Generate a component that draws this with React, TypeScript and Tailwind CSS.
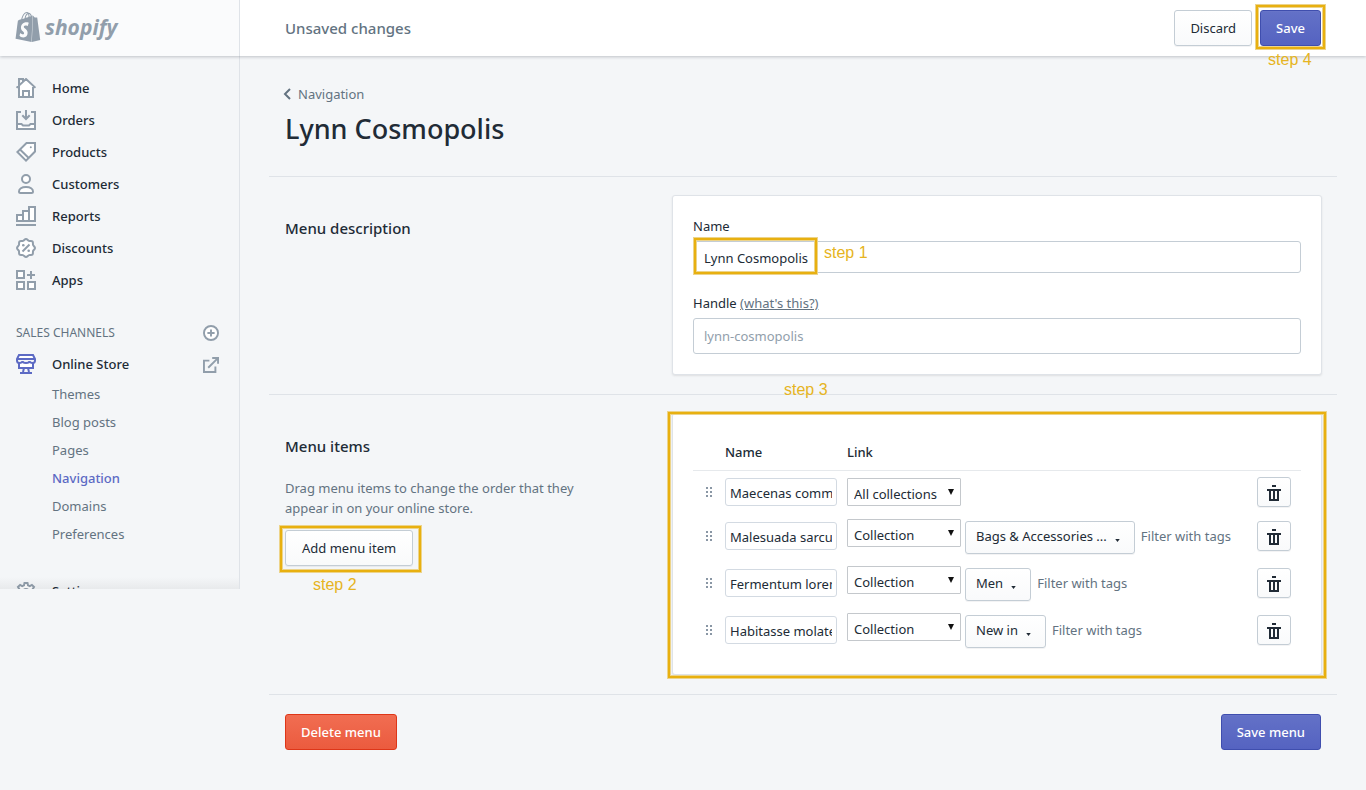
import type { ReactNode } from "react";
import { SiShopify } from "react-icons/si";

type IconProps = { children: ReactNode; className?: string };

function Icon({ children, className = "size-5 text-[#919eab]" }: IconProps) {
  return (
    <svg viewBox="0 0 20 20" fill="none" stroke="currentColor" strokeWidth="2" className={className} aria-hidden="true">
      {children}
    </svg>
  );
}

const navItems: { label: string; icon: ReactNode }[] = [
  {
    label: "Home",
    icon: (
      <>
        <path d="M3 8.500V19h14V8.500L10 2z" fill="#fff" stroke="none" />
        <path d="M3 9V1h4v3M3 9v10h14V9M.5 9.800 10 1l9.500 8.800M7 19v-6h6v6" />
      </>
    ),
  },
  {
    label: "Orders",
    icon: (
      <>
        <path d="M1 14h4.500l1.500 1.500h6l1.500-1.500H19v5H1z" fill="#fff" stroke="none" />
        <path d="M5 2H1v17h18V2h-4M1 14h4.500l1.500 1.500h6l1.500-1.500H19M10 0v8.500M6.300 5.200 10 9l3.700-3.800" />
      </>
    ),
  },
  {
    label: "Products",
    icon: (
      <>
        <path d="M10.500 1H19v8.500L10 18.600 1.400 10z" fill="#fff" />
        <path d="m4 7.500 9 8.700" />
        <circle cx="14.800" cy="5.200" r="1" fill="currentColor" stroke="none" />
      </>
    ),
  },
  {
    label: "Customers",
    icon: (
      <>
        <circle cx="10" cy="5" r="4" fill="#fff" />
        <path d="M10 13c-4.400 0-7 2-7 4.500 0 1 .5 1.500 1.500 1.500h11c1 0 1.500-.5 1.500-1.500C17 15 14.400 13 10 13z" fill="#fff" />
      </>
    ),
  },
  {
    label: "Reports",
    icon: (
      <>
        <path d="M1 15V9h6v6zM7 15V5h6v10zM13 15V1h6v14z" fill="#fff" />
        <path d="M0 19h20" />
      </>
    ),
  },
  {
    label: "Discounts",
    icon: (
      <>
        <path
          d="M10 1c1.300 0 1.900 1.500 3 1.900 1.100.4 2.600-.4 3.500.6s.1 2.400.6 3.500C17.500 8.100 19 8.700 19 10s-1.500 1.900-1.900 3c-.5 1.100.3 2.600-.6 3.500s-2.400.1-3.500.6c-1.100.4-1.700 1.900-3 1.900s-1.900-1.500-3-1.900c-1.100-.5-2.600.3-3.500-.6s-.1-2.400-.6-3.500C2.500 11.900 1 11.300 1 10s1.500-1.900 1.900-3c.5-1.100-.3-2.600.6-3.500s2.400-.2 3.500-.6C8.100 2.500 8.700 1 10 1z"
          fill="#fff"
        />
        <path d="m6.500 13.500 7-7" />
        <circle cx="7.300" cy="7.300" r="1.300" fill="currentColor" stroke="none" />
        <circle cx="12.700" cy="12.700" r="1.300" fill="currentColor" stroke="none" />
      </>
    ),
  },
  {
    label: "Apps",
    icon: (
      <>
        <path d="M1 1h7v7H1zM1 12h7v7H1zM12 12h7v7h-7z" fill="#fff" />
        <path d="M11 5h8M15 1v8" />
      </>
    ),
  },
];

const storeLinks = ["Themes", "Blog posts", "Pages", "Navigation", "Domains", "Preferences"];

type MenuItem = { name: string; link: string; target?: string };

const menuItems: MenuItem[] = [
  { name: "Maecenas commodo", link: "All collections" },
  { name: "Malesuada sarcuat", link: "Collection", target: "Bags & Accessories ..." },
  { name: "Fermentum lorem", link: "Collection", target: "Men" },
  { name: "Habitasse molates", link: "Collection", target: "New in" },
];

const plainButton =
  "rounded-[3px] border border-[#c4cdd5] bg-linear-to-b from-white to-[#f9fafb] text-[#212b36] shadow-[0_1px_0_rgba(22,29,37,0.05)]";
const primaryButton =
  "h-9 rounded-[3px] border border-[#3f4eae] bg-linear-to-b from-[#6371c7] to-[#5563c1] px-[15px] pt-0.5 text-[13px] font-medium text-white shadow-[inset_0_1px_0_#6774c8]";

function Highlight({ className }: { className: string }) {
  return (
    <span
      aria-hidden="true"
      className={`pointer-events-none absolute border-2 border-[#e8b010] shadow-[0_0_0_1px_#edd48a,inset_0_0_0_1px_#edd48a] ${className}`}
    />
  );
}

function Step({ n, className }: { n: number; className: string }) {
  return (
    <span
      className={`pointer-events-none absolute font-['Liberation_Sans',Arial,sans-serif] text-base leading-5 whitespace-nowrap text-[#e6b422] ${className}`}
    >
      step {n}
    </span>
  );
}

function Sidebar() {
  return (
    <nav className="relative h-[533px] w-60 shrink-0 overflow-hidden border-r border-[#dfe3e8] pt-4">
      <ul>
        {navItems.map((item) => (
          <li key={item.label}>
            <a href="#" className="flex h-8 items-center gap-4 px-4 text-[13px] font-medium text-[#212b36]">
              <Icon>{item.icon}</Icon>
              <span className="pt-0.5">{item.label}</span>
            </a>
          </li>
        ))}
      </ul>
      <div className="mt-5 flex h-8 items-center justify-between pt-px pr-5 pl-4">
        <h2 className="text-xs text-[#637381] uppercase">Sales channels</h2>
        <button type="button" aria-label="Add sales channel">
          <Icon className="size-4 text-[#919eab]">
            <circle cx="10" cy="10" r="8.800" strokeWidth="2.400" fill="#fff" />
            <path d="M5.500 10h9M10 5.500v9" strokeWidth="2.400" />
          </Icon>
        </button>
      </div>
      <div className="flex h-8 items-center justify-between pr-5 pl-4">
        <a href="#" className="flex items-center gap-4 text-[13px] font-medium text-[#212b36]">
          <Icon className="size-5 text-[#5c6ac4]">
            <path d="M3 8v6h14V8M3 1h14l2 4H1z" fill="#fff" />
            <path d="M1 5v1.500C1 8 2 9 3.500 9S6.500 8 6.500 7c0 1 1.500 2 3.500 2s3.500-1 3.500-2c0 1 1.500 2 3 2S19 8 19 6.500V5M8 14l-1 4M12 14l1 4M4 19h12" />
          </Icon>
          <span className="pt-0.5">Online Store</span>
        </a>
        <a href="#" aria-label="View your online store" className="pt-0.5">
          <Icon className="size-4 text-[#919eab]">
            <path d="M8 4.500H1.200v14.300h14.300V12" strokeWidth="2.400" />
            <path d="M6.500 13.500 18 2M11.500 1.300h7.300v7.200" strokeWidth="2.400" />
          </Icon>
        </a>
      </div>
      <ul>
        {storeLinks.map((label) => (
          <li key={label}>
            <a
              href="#"
              className={`flex h-7 items-center pt-px pl-[52px] text-[13px] ${
                label === "Navigation" ? "font-medium text-[#5c6ac4]" : "text-[#637381]"
              }`}
            >
              {label}
            </a>
          </li>
        ))}
      </ul>
      <a href="#" className="mt-7 flex h-8 items-center gap-4 px-4 text-[13px] font-medium text-[#212b36]">
        <Icon>
          <path
            d="M8.500 1h3l.5 2.400 1.800.8 2.100-1.300 2.100 2.100-1.300 2.100.8 1.800 2.500.6v3l-2.500.5-.8 1.800 1.300 2.100-2.100 2.100-2.100-1.300-1.800.8-.5 2.500h-3L8 18.500l-1.800-.8L4.100 19 2 16.900l1.300-2.100-.8-1.800L0 12.500v-3l2.500-.6.8-1.800L2 5l2.100-2.100 2.100 1.300L8 3.400z"
            fill="#fff"
          />
          <circle cx="10" cy="10.500" r="3.500" />
        </Icon>
        Settings
      </a>
      <div className="pointer-events-none absolute inset-x-0 bottom-0 h-3 bg-linear-to-b from-transparent to-black/5" />
    </nav>
  );
}

function TrashIcon() {
  return (
    <svg viewBox="0 0 14 16" className="h-4 w-3.5" fill="none" stroke="#212b36" strokeWidth="2" aria-hidden="true">
      <path d="M5 1h4M0 5h14M3 5v10h8V5M7 6v9" />
    </svg>
  );
}

function GripIcon() {
  return (
    <svg viewBox="0 0 6 10" className="h-2.5 w-1.5" fill="#8a97a5" aria-hidden="true">
      <path d="M0 0h2v2H0zM4 0h2v2H4zM0 4h2v2H0zM4 4h2v2H4zM0 8h2v2H0zM4 8h2v2H4z" />
    </svg>
  );
}

function MenuRow({ item }: { item: MenuItem }) {
  return (
    <tr className="align-top">
      <td className="pt-4 pl-[13px]">
        <GripIcon />
      </td>
      <td className="pt-[7px] pr-2.5">
        <input
          aria-label="Menu item name"
          defaultValue={item.name}
          className="block h-7 w-full rounded-[3px] border border-[#d3dae2] bg-white px-1 pt-0.5 text-[13px] text-[#212b36]"
        />
      </td>
      <td className={item.target ? "pt-1" : "pt-[7px]"}>
        <div className="flex items-start">
          <div className="relative mr-1 w-[114px]">
            <select
              aria-label="Link type"
              defaultValue={item.link}
              className="block h-7 w-full appearance-none rounded-[1px] border border-[#c4c8cc] bg-white pt-1.5 pl-1.5 text-[13px] text-[#212b36]"
            >
              <option>All collections</option>
              <option>Collection</option>
            </select>
            <svg viewBox="0 0 6 6" className="pointer-events-none absolute top-[11px] right-[7px] size-1.5" fill="#111" aria-hidden="true">
              <path d="M0 0h6L3 6z" />
            </svg>
          </div>
          {item.target && (
            <>
              <button type="button" className={`mt-0.5 flex h-[33px] items-center gap-2 pr-3.5 pl-2.5 text-[13px] ${plainButton}`}>
                <span className="pb-px">{item.target}</span>
                <svg viewBox="0 0 6 4" className="mt-1.5 h-[3px] w-[5px]" fill="#212b36" aria-hidden="true">
                  <path d="M0 0h6L3 4z" />
                </svg>
              </button>
              <a href="#" className="mt-[7px] ml-1.5 text-[13px] leading-5 text-[#637381]">
                Filter with tags
              </a>
            </>
          )}
        </div>
      </td>
      <td className="pt-1.5 pb-2">
        <button type="button" aria-label="Delete menu item" className={`flex h-[30px] w-[34px] items-center justify-center pt-0.5 ${plainButton}`}>
          <TrashIcon />
        </button>
        {item.target && <div className="h-[3px]" />}
      </td>
    </tr>
  );
}

export default function App() {
  return (
    <div className="min-h-screen bg-[#f4f6f8] font-['Noto_Sans','Open_Sans',sans-serif] text-[#212b36]">
      <header className="relative z-10 flex h-14 bg-white shadow-[0_1px_3px_rgba(33,43,54,0.25)]">
        <a href="#" className="flex w-60 shrink-0 items-center gap-[3px] border-r border-[#dfe3e8] bg-[#fafbfc] pb-0.5 pl-3.5 text-[#919eab]">
          <SiShopify className="h-[30px] w-7" preserveAspectRatio="none" aria-hidden="true" />
          <span className="font-['Open_Sans',sans-serif] text-[21px] leading-7 font-bold italic">shopify</span>
        </a>
        <div className="flex flex-1 items-center pr-[45px] pl-[45px]">
          <h2 className="flex-1 text-[15px] font-medium text-[#637381]">Unsaved changes</h2>
          <button type="button" className={`mr-2 h-9 px-[15px] pt-0.5 text-[13px] ${plainButton}`}>
            Discard
          </button>
          <div className="relative">
            <button type="button" className={primaryButton}>
              Save
            </button>
            <Highlight className="-inset-x-1 -top-[5px] -bottom-[3px]" />
            <Step n={4} className="top-10 left-2" />
          </div>
        </div>
      </header>

      <div className="flex items-start">
        <Sidebar />
        <main className="min-w-0 flex-1 px-[29px] pt-7 pb-10">
          <div className="px-4 pb-[29px]">
            <a href="#" className="flex h-5 items-center gap-[7px] text-[13px] text-[#637381]">
              <svg viewBox="0 0 8 12" className="-ml-0.5 h-3 w-2" fill="none" stroke="#637381" strokeWidth="2" aria-hidden="true">
                <path d="M7 1 2 6l5 5" />
              </svg>
              <span className="pt-0.5">Navigation</span>
            </a>
            <h1 className="mt-[7px] text-[27px] leading-9 font-medium">Lynn Cosmopolis</h1>
          </div>

          <section className="grid grid-cols-[31fr_50fr] border-t border-[#dfe3e8] pt-[18px] pr-[15px] pb-[19px]">
            <h2 className="pt-[21px] pl-4 text-[15px] leading-6 font-medium">Menu description</h2>
            <div className="rounded-[3px] border border-[#dfe3e8] bg-white p-5 shadow-[0_1px_2px_rgba(63,63,68,0.12)]">
              <label htmlFor="menu-name" className="block text-[13px] leading-5">
                Name
              </label>
              <div className="relative mt-[5px]">
                <input
                  id="menu-name"
                  defaultValue="Lynn Cosmopolis"
                  className="block h-8 w-full rounded-[3px] border border-[#c4cdd5] px-2.5 pt-0.5 text-[13px]"
                />
                <Highlight className="-top-[3px] -bottom-px left-px w-[123px]" />
                <Step n={1} className="top-0.5 left-[131px]" />
              </div>
              <div className="mt-5 text-[13px] leading-5">
                <label htmlFor="menu-handle">Handle</label>{" "}
                <a href="#" className="text-[#637381] underline">
                  (what's this?)
                </a>
              </div>
              <input
                id="menu-handle"
                placeholder="lynn-cosmopolis"
                className="mt-[5px] block h-9 w-full rounded-[3px] border border-[#c4cdd5] px-2.5 text-[13px] placeholder:text-[#919eab]"
              />
            </div>
          </section>

          <section className="grid grid-cols-[31fr_50fr] border-t border-[#dfe3e8] pt-[18px] pr-[15px] pb-[19px]">
            <div className="pt-[21px] pl-4">
              <h2 className="text-[15px] leading-6 font-medium">Menu items</h2>
              <p className="mt-5 max-w-[310px] text-[13px] leading-5 text-[#637381]">
                Drag menu items to change the order that they appear in on your online store.
              </p>
              <div className="relative mt-3 w-fit">
                <button type="button" className={`h-9 px-4 pt-0.5 text-[13px] ${plainButton}`}>
                  Add menu item
                </button>
                <Highlight className="-top-1 -right-2 -bottom-1.5 -left-[5px]" />
                <Step n={2} className="top-[45px] left-7" />
              </div>
            </div>
            <div className="relative rounded-[3px] border border-[#dfe3e8] bg-white px-5 pt-5 pb-[18px] shadow-[0_1px_2px_rgba(63,63,68,0.12)]">
              <table className="w-full table-fixed border-collapse">
                <thead>
                  <tr className="h-9 border-b border-[#e6e9ec] text-left text-[13px]">
                    <th className="w-8" aria-label="Reorder" />
                    <th className="w-[122px] pt-0.5 font-medium">Name</th>
                    <th className="pt-0.5 font-medium">Link</th>
                    <th className="w-11" aria-label="Remove" />
                  </tr>
                </thead>
                <tbody>
                  {menuItems.map((item) => (
                    <MenuRow key={item.name} item={item} />
                  ))}
                </tbody>
              </table>
              <Highlight className="-inset-x-[5px] -top-0.5 -bottom-1" />
              <Step n={3} className="-top-[34px] left-[111px]" />
            </div>
          </section>

          <div className="flex justify-between border-t border-[#dfe3e8] pt-[19px] pr-4 pl-4">
            <button
              type="button"
              className="h-9 rounded-[3px] border border-[#de3618] bg-linear-to-b from-[#f16d52] to-[#eb5b3e] px-[15px] pt-0.5 text-[13px] font-medium text-white"
            >
              Delete menu
            </button>
            <button type="button" className={primaryButton}>
              Save menu
            </button>
          </div>
        </main>
      </div>
    </div>
  );
}
